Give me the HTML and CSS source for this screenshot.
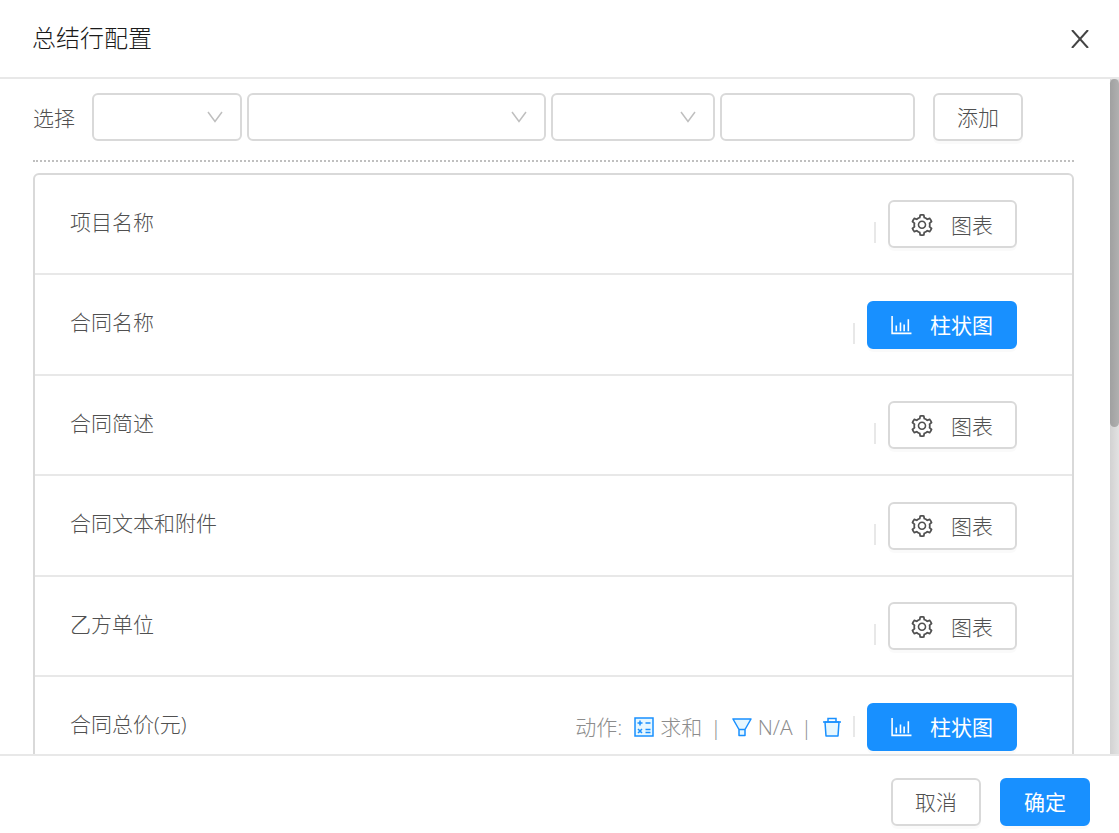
FILE: index.html
```html
<!DOCTYPE html>
<html lang="zh-CN">
<head>
    <meta charset="UTF-8">
    <meta name="viewport" content="width=device-width, initial-scale=1.0">
    <title>总结行配置</title>
    <link rel="stylesheet" href="styles.css">
</head>
<body>
    <svg class="sprite" aria-hidden="true">
        <symbol id="icon-down" viewBox="0 0 16 12">
            <path d="M1 1l7 9.500L15 1" fill="none" stroke="currentColor" stroke-width="1.500"/>
        </symbol>
        <symbol id="icon-close" viewBox="0 0 18 18">
            <path d="M1 0L17 18M17 0L1 18" fill="none" stroke="currentColor" stroke-width="2"/>
        </symbol>
        <symbol id="icon-setting" viewBox="64 64 896 896">
            <path fill="currentColor" d="M924.800 625.700l-65.500-56c3.100-19 4.700-38.400 4.700-57.800s-1.600-38.800-4.700-57.800l65.500-56a32.030 32.030 0 0 0 9.300-35.200l-.9-2.600a443.740 443.740 0 0 0-79.700-137.900l-1.800-2.100a32.120 32.120 0 0 0-35.100-9.500l-81.300 28.900c-30-24.600-63.500-44-99.700-57.600l-15.700-85a32.050 32.050 0 0 0-25.800-25.700l-2.700-.5c-52.100-9.400-106.900-9.400-159 0l-2.700.5a32.050 32.050 0 0 0-25.800 25.700l-15.800 85.400a351.860 351.860 0 0 0-99 57.400l-81.900-29.100a32 32 0 0 0-35.100 9.500l-1.800 2.100a446.020 446.020 0 0 0-79.700 137.900l-.9 2.600c-4.500 12.500-.8 26.500 9.300 35.200l66.300 56.600c-3.100 18.800-4.600 38-4.600 57.100 0 19.200 1.500 38.400 4.600 57.100L99 625.500a32.030 32.030 0 0 0-9.300 35.200l.9 2.600c18.100 50.400 44.900 96.900 79.700 137.900l1.800 2.100a32.120 32.120 0 0 0 35.100 9.500l81.900-29.100c29.800 24.500 63.100 43.900 99 57.400l15.800 85.400a32.050 32.050 0 0 0 25.800 25.700l2.700.5a449.400 449.400 0 0 0 159 0l2.700-.5a32.050 32.050 0 0 0 25.800-25.700l15.700-85a350 350 0 0 0 99.700-57.600l81.300 28.900a32 32 0 0 0 35.100-9.500l1.800-2.100c34.800-41.100 61.600-87.500 79.700-137.900l.9-2.600c4.500-12.300.8-26.300-9.300-35zM788.300 465.900c2.500 15.100 3.800 30.600 3.800 46.100s-1.300 31-3.800 46.100l-6.600 40.100 74.700 63.900a370.030 370.030 0 0 1-42.600 73.600L721 702.800l-31.400 25.800c-23.900 19.600-50.500 35-79.300 45.800l-38.100 14.300-17.900 97a377.500 377.500 0 0 1-85 0l-17.900-97.200-37.800-14.500c-28.500-10.800-55-26.200-78.700-45.700l-31.400-25.900-93.400 33.200c-17-22.900-31.200-47.600-42.600-73.600l75.500-64.500-6.500-40c-2.400-14.900-3.700-30.300-3.700-45.500 0-15.300 1.200-30.600 3.700-45.500l6.500-40-75.500-64.500c11.300-26.100 25.600-50.700 42.600-73.600l93.400 33.200 31.400-25.900c23.700-19.500 50.200-34.900 78.700-45.700l37.900-14.300 17.900-97.200c28.100-3.200 56.800-3.200 85 0l17.900 97 38.100 14.300c28.700 10.800 55.400 26.200 79.300 45.800l31.400 25.800 92.800-32.900c17 22.900 31.200 47.600 42.600 73.600L781.800 426l6.500 39.900zM512 326c-97.200 0-176 78.800-176 176s78.800 176 176 176 176-78.800 176-176-78.800-176-176-176zm79.200 255.200A111.600 111.600 0 0 1 512 614c-29.900 0-58-11.700-79.200-32.800A111.600 111.600 0 0 1 400 502c0-29.900 11.700-58 32.800-79.200C454 401.600 482.100 390 512 390c29.900 0 58 11.600 79.200 32.800A111.600 111.600 0 0 1 624 502c0 29.900-11.700 58-32.800 79.200z"/>
        </symbol>
        <symbol id="icon-bar" viewBox="0 0 21 21">
            <path d="M2 2v16.500h18.500M6 16.500V11M10 16.500V8M13.500 16.500V10M17.500 16.500V5" fill="none" stroke="currentColor" stroke-width="1.500"/>
        </symbol>
        <symbol id="icon-calc" viewBox="0 0 20 20">
            <rect x="1" y="1" width="18" height="18" fill="#e6f7ff" stroke="currentColor" stroke-width="1.500"/>
            <path d="M3.500 6h5M6 3.500v5M11.500 6h5M4 12l4 4M8 12l-4 4M11.500 12.500h5M11.500 15.500h5" fill="none" stroke="currentColor" stroke-width="1.500"/>
        </symbol>
        <symbol id="icon-filter" viewBox="0 0 20 20">
            <path d="M1 2h18l-6 10.500v6H7v-6z" fill="#e6f7ff" stroke="currentColor" stroke-width="1.500" stroke-linejoin="round"/>
            <path d="M7 12.500h6" stroke="currentColor" stroke-width="1.500"/>
        </symbol>
        <symbol id="icon-delete" viewBox="0 0 20 20">
            <path d="M3 5l1 14h12l1-14z" fill="#e6f7ff" stroke="currentColor" stroke-width="1.500" stroke-linejoin="round"/>
            <path d="M1 5h18M6 5V1.500h8V5" fill="none" stroke="currentColor" stroke-width="1.500"/>
        </symbol>
    </svg>

    <div class="modal">
        <header class="modal-header">
            <h1>总结行配置</h1>
            <button class="close" type="button" aria-label="关闭"><svg><use href="#icon-close"/></svg></button>
        </header>

        <div class="scroll-area">
            <main class="modal-body">
                <form class="toolbar">
                    <label for="column">选择</label>
                    <div class="fields">
                        <div class="select-wrap">
                            <select id="column"></select>
                            <svg><use href="#icon-down"/></svg>
                        </div>
                        <div class="select-wrap">
                            <select aria-label="动作"></select>
                            <svg><use href="#icon-down"/></svg>
                        </div>
                        <div class="select-wrap">
                            <select aria-label="条件"></select>
                            <svg><use href="#icon-down"/></svg>
                        </div>
                        <input class="field-value" type="text" aria-label="值">
                    </div>
                    <button class="btn" type="button">添加</button>
                </form>

                <ul class="list">
                    <li>
                        <span class="name">项目名称</span>
                        <i class="split"></i>
                        <button class="btn" type="button"><svg><use href="#icon-setting"/></svg>图表</button>
                    </li>
                    <li>
                        <span class="name">合同名称</span>
                        <i class="split"></i>
                        <button class="btn primary" type="button"><svg><use href="#icon-bar"/></svg>柱状图</button>
                    </li>
                    <li>
                        <span class="name">合同简述</span>
                        <i class="split"></i>
                        <button class="btn" type="button"><svg><use href="#icon-setting"/></svg>图表</button>
                    </li>
                    <li>
                        <span class="name">合同文本和附件</span>
                        <i class="split"></i>
                        <button class="btn" type="button"><svg><use href="#icon-setting"/></svg>图表</button>
                    </li>
                    <li>
                        <span class="name">乙方单位</span>
                        <i class="split"></i>
                        <button class="btn" type="button"><svg><use href="#icon-setting"/></svg>图表</button>
                    </li>
                    <li class="has-actions">
                        <span class="name">合同总价(元)</span>
                        <div class="actions">
                            <span>动作:</span>
                            <svg><use href="#icon-calc"/></svg>
                            <span>求和</span>
                            <span class="bar">|</span>
                            <svg><use href="#icon-filter"/></svg>
                            <span>N/A</span>
                            <span class="bar">|</span>
                            <button class="remove" type="button" aria-label="删除"><svg><use href="#icon-delete"/></svg></button>
                        </div>
                        <i class="split"></i>
                        <button class="btn primary" type="button"><svg><use href="#icon-bar"/></svg>柱状图</button>
                    </li>
                </ul>
            </main>
            <div class="scrollbar"><div class="thumb"></div></div>
        </div>

        <footer class="modal-footer">
            <button class="btn" type="button">取消</button>
            <button class="btn primary" type="button">确定</button>
        </footer>
    </div>
</body>
</html>
```

FILE: styles.css
```css
* {
    box-sizing: border-box;
    margin: 0;
    padding: 0;
}

body {
    font-family: "Open Sans", "Noto Sans CJK SC", sans-serif;
    font-size: 21px;
    font-weight: 300;
    line-height: 32px;
    color: #505050;
    background: #fff;
}

.sprite {
    display: none;
}

.modal {
    display: flex;
    flex-direction: column;
    height: 100vh;
}

.modal-header {
    display: flex;
    align-items: center;
    justify-content: space-between;
    padding: 23px 30px 22px 32px;
    border-bottom: 2px solid #e8e8e8;
}

.modal-header h1 {
    padding-bottom: 2px;
    font-size: 24px;
    line-height: 30px;
    font-weight: 300;
    color: #1a1a1a;
}

.close {
    display: flex;
    border: none;
    background: none;
    color: #444;
    cursor: pointer;
}

.close svg {
    width: 18px;
    height: 18px;
}

.scroll-area {
    display: flex;
    flex: 1;
    min-height: 0;
}

.modal-body {
    flex: 1;
    min-width: 0;
    overflow-y: auto;
    scrollbar-width: none;
    padding: 14px 36px 0 33px;
}

.scrollbar {
    width: 9px;
    background: linear-gradient(to right, #d2d2d2, #e2e2e2);
}

.thumb {
    height: 348px;
    max-height: 100%;
    border-radius: 5px;
    background: linear-gradient(to right, #a0a0a0, #b0b0b0);
}

.toolbar {
    display: flex;
    align-items: center;
    padding-bottom: 19px;
    border-bottom: 2px dotted #bfbfbf;
}

.toolbar label {
    padding-top: 2px;
    margin-right: 17px;
}

.fields {
    display: grid;
    flex: 0 1 823px;
    grid-template-columns: 150fr 300fr 165fr 195fr;
    gap: 5px;
    margin-right: 18px;
}

.select-wrap {
    position: relative;
}

.select-wrap select,
.field-value {
    display: block;
    width: 100%;
    height: 48px;
    border: 2px solid #d9d9d9;
    border-radius: 6px;
    background: #fff;
    font: inherit;
    appearance: none;
}

.select-wrap svg {
    position: absolute;
    top: 18px;
    right: 19px;
    width: 16px;
    height: 12px;
    color: #bfbfbf;
    pointer-events: none;
}

.btn {
    display: flex;
    align-items: center;
    gap: 17px;
    height: 48px;
    padding: 1px 22px 0 21px;
    border: 2px solid #d9d9d9;
    border-radius: 6px;
    background: #fff;
    box-shadow: 0 3px 0 rgba(0, 0, 0, 0.02);
    color: #505050;
    font: inherit;
    white-space: nowrap;
    cursor: pointer;
}

.toolbar .btn,
.modal-footer .btn {
    padding: 0 22px;
}

.btn svg {
    width: 22px;
    height: 22px;
}

.btn.primary {
    border-color: #1890ff;
    background: #1890ff;
    color: #fff;
    font-weight: 400;
}

.list {
    margin: 11px 0 560px;
    border: 2px solid #d9d9d9;
    border-radius: 6px;
    list-style: none;
}

.list li {
    display: flex;
    align-items: center;
    height: 100px;
    padding: 0 55px 0 35px;
    border-bottom: 2px solid #e8e8e8;
}

.list li:nth-child(even) {
    height: 101px;
}

.list .btn svg {
    margin-right: 1px;
}

.name {
    flex: 1;
    padding-bottom: 5px;
}

.split {
    width: 2px;
    height: 21px;
    margin: 17px 12px 0 0;
    background: #e8e8e8;
}

.has-actions .split {
    margin-top: 0;
}

.actions {
    display: flex;
    align-items: center;
    margin-right: 11px;
    color: #8c8c8c;
}

.actions svg {
    width: 20px;
    height: 20px;
    margin: 0 6px 0 12px;
    color: #1890ff;
}

.bar {
    margin-left: 8px;
}

.actions .bar + svg {
    margin-left: 10px;
}

.remove {
    display: flex;
    border: none;
    background: none;
    cursor: pointer;
}

.actions .remove svg {
    margin: 0 0 0 10px;
}

.modal-footer {
    display: flex;
    justify-content: flex-end;
    gap: 19px;
    padding: 22px 29px 7px;
    border-top: 2px solid #e8e8e8;
}
```
